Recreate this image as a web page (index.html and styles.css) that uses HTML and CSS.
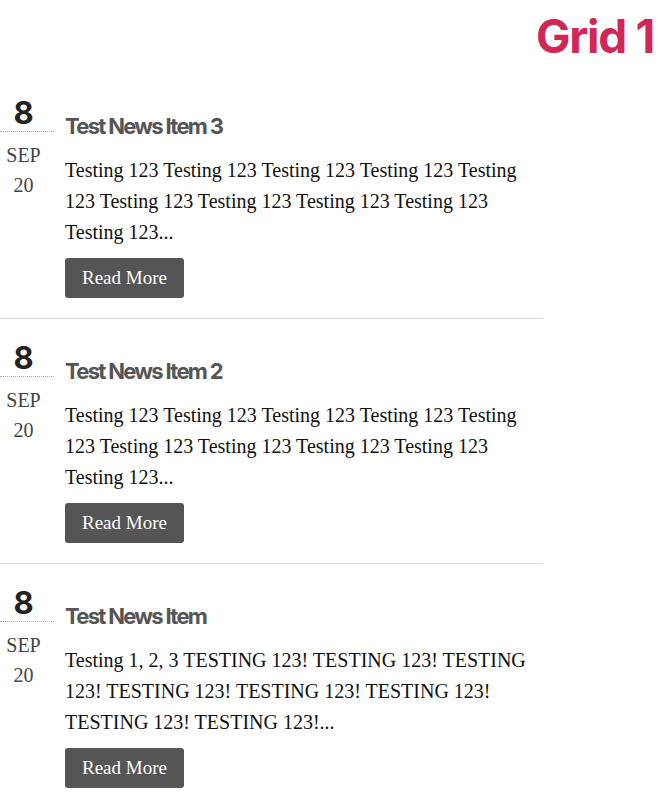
FILE: index.html
```html
<!DOCTYPE html>
<html>
<head>
<meta charset="utf-8">
<link rel="stylesheet" href="styles.css">
</head>
<body>
<header class="top">
  <h1 class="title">Grid 1</h1>
</header>
<div class="news">
  <article class="item">
    <div class="date">
      <div class="day">8</div>
      <div class="month">SEP</div>
      <div class="year">20</div>
    </div>
    <div class="body">
      <h2 class="heading">Test News Item 3</h2>
      <p class="text">Testing 123 Testing 123 Testing 123 Testing 123 Testing 123 Testing 123 Testing 123 Testing 123 Testing 123 Testing 123...</p>
      <a class="btn" href="#">Read More</a>
    </div>
  </article>
  <article class="item">
    <div class="date">
      <div class="day">8</div>
      <div class="month">SEP</div>
      <div class="year">20</div>
    </div>
    <div class="body">
      <h2 class="heading">Test News Item 2</h2>
      <p class="text">Testing 123 Testing 123 Testing 123 Testing 123 Testing 123 Testing 123 Testing 123 Testing 123 Testing 123 Testing 123...</p>
      <a class="btn" href="#">Read More</a>
    </div>
  </article>
  <article class="item">
    <div class="date">
      <div class="day">8</div>
      <div class="month">SEP</div>
      <div class="year">20</div>
    </div>
    <div class="body">
      <h2 class="heading">Test News Item</h2>
      <p class="text">Testing 1, 2, 3 TESTING 123! TESTING 123! TESTING 123! TESTING 123! TESTING 123! TESTING 123! TESTING 123! TESTING 123!...</p>
      <a class="btn" href="#">Read More</a>
    </div>
  </article>
</div>
</body>
</html>
```
FILE: styles.css
```css
html, body {
  margin: 0;
  padding: 0;
  background: #fff;
}
body {
  font-family: "Liberation Serif", "DejaVu Serif", serif;
  color: #111;
}
.top {
  height: 74px;
  box-sizing: border-box;
  padding: 13px 7px 0 0;
  text-align: right;
}
.title {
  margin: 0;
  font-family: Inter, "Liberation Sans", sans-serif;
  font-weight: 700;
  font-size: 46px;
  line-height: 46px;
  letter-spacing: -1.3px;
  color: #d12757;
}
.news {
  width: 543px;
}
.item {
  display: grid;
  grid-template-columns: 54px 1fr;
  column-gap: 11px;
  padding: 20px 0 20px 0;
  border-bottom: 1px solid #dcdcdc;
}
.item:last-child {
  border-bottom: none;
}
.date {
  color: #444;
}
.day {
  font-family: Inter, "Liberation Sans", sans-serif;
  font-weight: 700;
  font-size: 31px;
  line-height: 37px;
  color: #222;
  text-align: center;
  padding-right: 7px;
  border-bottom: 1px dotted #aaa;
}
.month, .year {
  font-size: 20px;
  line-height: 30px;
  text-align: center;
  padding-right: 7px;
}
.month {
  margin-top: 8px;
}
.body {
  min-width: 0;
}
.heading {
  margin: 19px 0 0 0;
  font-family: Inter, "Liberation Sans", sans-serif;
  font-weight: 700;
  font-size: 22px;
  line-height: 26px;
  letter-spacing: -1.7px;
  color: #555;
}
.text {
  margin: 16px 0 0 0;
  font-size: 20px;
  line-height: 31px;
  color: #111;
}
.btn {
  display: inline-block;
  margin-top: 10px;
  height: 40px;
  line-height: 40px;
  padding: 0 17px;
  background: #555;
  color: #fff;
  border-radius: 3px;
  font-size: 19px;
  text-decoration: none;
}
```
